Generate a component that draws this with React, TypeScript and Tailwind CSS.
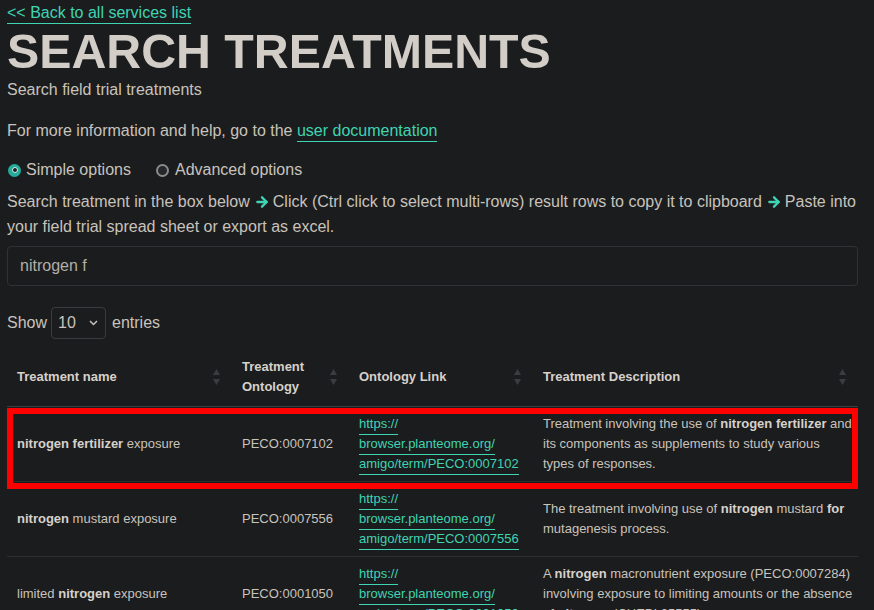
import { ArrowRight } from "lucide-react";

function SortIcon() {
    return (
        <svg width="7" height="16" viewBox="0 0 7 16" className="shrink-0 text-[#3a3d40]" fill="currentColor">
            <path d="M3.5 0 L7 6 H0 Z" />
            <path d="M0 10 H7 L3.5 16 Z" />
        </svg>
    );
}

function OntologyLink({ id }: { id: string }) {
    return (
        <a href="#" className="text-[#3fd4b2]">
            <span className="border-b border-[#3fd4b2] pb-[3px]">https://</span>
            <br />
            <span className="border-b border-[#3fd4b2] pb-[3px]">browser.planteome.org/</span>
            <br />
            <span className="border-b border-[#3fd4b2] pb-[3px]">amigo/term/{id}</span>
        </a>
    );
}

const rows = [
    {
        name: <><b className="text-[#d6d1ca]">nitrogen fertilizer</b> exposure</>,
        id: "PECO:0007102",
        desc: <>Treatment involving the use of <b className="text-[#d6d1ca]">nitrogen fertilizer</b> and<br />its components as supplements to study various<br />types of responses.</>,
    },
    {
        name: <><b className="text-[#d6d1ca]">nitrogen</b> mustard exposure</>,
        id: "PECO:0007556",
        desc: <>The treatment involving use of <b className="text-[#d6d1ca]">nitrogen</b> mustard <b className="text-[#d6d1ca]">for</b><br />mutagenesis process.</>,
    },
    {
        name: <>limited <b className="text-[#d6d1ca]">nitrogen</b> exposure</>,
        id: "PECO:0001050",
        desc: <>A <b className="text-[#d6d1ca]">nitrogen</b> macronutrient exposure (PECO:0007284)<br />involving exposure to limiting amounts or the absence<br />of <b className="text-[#d6d1ca]">nitrogen</b> (CHEBI:25555).</>,
    },
];

const headers = ["Treatment name", "Treatment Ontology", "Ontology Link", "Treatment Description"];

export default function App() {
    return (
        <div className="min-h-screen w-full overflow-hidden bg-[#1b1c1e] text-[#c8c3bc] font-['Liberation_Sans',Arial,sans-serif]">
            <div className="ml-[7px] w-[851px]">

                {/* Header */}
                <div className="pt-[2px] text-[16px] leading-[22px]">
                    <a href="#" className="text-[#3fd4b2] border-b border-[#3fd4b2] pb-[2px]">&lt;&lt; Back to all services list</a>
                </div>
                <h1 className="mt-[3px] text-[48.3px] leading-[48px] font-bold text-[#d2cdc6]">SEARCH TREATMENTS</h1>
                <p className="mt-[3px] text-[16px] leading-6">Search field trial treatments</p>

                <p className="mt-[17px] text-[16px] leading-6">
                    For more information and help, go to the{" "}
                    <a href="#" className="text-[#3fd4b2] border-b border-[#3fd4b2] pb-[2px]">user documentation</a>
                </p>

                {/* Options */}
                <div className="mt-[15px] flex items-center text-[16px] leading-6">
                    <span className="ml-[1px] flex h-[13px] w-[13px] items-center justify-center rounded-full bg-[#23ad9d]">
                        <span className="h-[6px] w-[6px] rounded-full border border-[#d8efe9] bg-[#1b1c1e]" />
                    </span>
                    <span className="ml-[5px]">Simple options</span>
                    <span className="ml-[25px] h-[13px] w-[13px] rounded-full border-2 border-[#8a8b8d] bg-[#26272a]" />
                    <span className="ml-[6px]">Advanced options</span>
                </div>

                <p className="mt-[7px] text-[16px] leading-[25px]">
                    Search treatment in the box below
                    <ArrowRight className="ml-[4px] mr-[3px] inline-block h-[16px] w-[16px] -translate-y-[1px] text-[#3fd4b2]" strokeWidth={3.5} />
                    Click (Ctrl click to select multi-rows) result rows to copy it to clipboard
                    <ArrowRight className="ml-[4px] mr-[3px] inline-block h-[16px] w-[16px] -translate-y-[1px] text-[#3fd4b2]" strokeWidth={3.5} />
                    Paste into<br />
                    your field trial spread sheet or export as excel.
                </p>

                {/* Search box */}
                <div className="mt-[7px] flex h-[40px] items-center rounded-[4px] border border-[#303235] bg-[#1b1c1e] pl-[12px] text-[16px] text-[#b3aea7]">
                    nitrogen f
                </div>

                {/* Show entries */}
                <div className="mt-[21px] flex items-center text-[16px] leading-6">
                    <span>Show</span>
                    <div className="ml-[4px] flex h-[32px] w-[55px] items-center justify-between rounded-[4px] border border-[#3a3c3f] pl-[6px] pr-[7px]">
                        <span>10</span>
                        <svg width="9" height="6" viewBox="0 0 9 6" fill="none" stroke="#c8c3bc" strokeWidth="1.5">
                            <path d="M1 1 L4.5 4.5 L8 1" />
                        </svg>
                    </div>
                    <span className="ml-[6px]">entries</span>
                </div>

                {/* Table */}
                <div className="relative mt-[9px]">
                    <table className="w-full table-fixed border-collapse text-[13px] leading-5">
                        <colgroup>
                            <col className="w-[225px]" />
                            <col className="w-[117px]" />
                            <col className="w-[184px]" />
                            <col className="w-[325px]" />
                        </colgroup>
                        <thead>
                            <tr className="border-b border-[#3b3d40]">
                                {headers.map(h => (
                                    <th key={h} className="py-[9px] pl-[10px] pr-[12px] text-left font-bold text-[#d6d1ca]">
                                        <div className="flex items-center justify-between">
                                            <span>
                                                {h === "Treatment Ontology" ? <>Treatment<br />Ontology</> : h}
                                            </span>
                                            <SortIcon />
                                        </div>
                                    </th>
                                ))}
                            </tr>
                        </thead>
                        <tbody>
                            {rows.map(r => (
                                <tr key={r.id} className="border-b border-[#2d2f31]">
                                    <td className="px-[10px] py-[7px] align-middle">{r.name}</td>
                                    <td className="px-[10px] py-[7px] align-middle">{r.id}</td>
                                    <td className="px-[10px] py-[7px] align-middle whitespace-nowrap"><OntologyLink id={r.id} /></td>
                                    <td className="px-[10px] py-[7px] align-middle whitespace-nowrap">{r.desc}</td>
                                </tr>
                            ))}
                        </tbody>
                    </table>

                    {/* red highlight drawn over first row */}
                    <div className="pointer-events-none absolute left-0 top-[60px] h-[81px] w-[851px] border-[6px] border-[#ff0000]" />
                </div>
            </div>
        </div>
    );
}
